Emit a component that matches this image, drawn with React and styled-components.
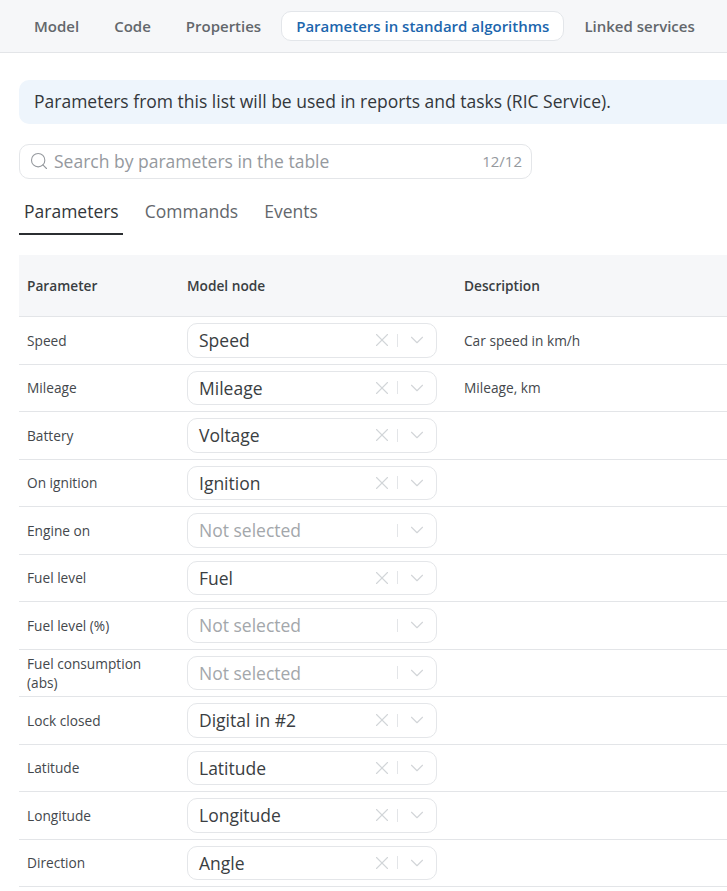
import styled, { createGlobalStyle } from "styled-components";
import { Search, X, ChevronDown } from "lucide-react";

const GlobalStyle = createGlobalStyle`
  html, body {
    margin: 0;
    padding: 0;
    background: #fff;
    font-family: "Open Sans", "Noto Sans", sans-serif;
    overflow: hidden;
  }
`

const Page = styled.div`
  width: 727px;
  height: 891px;
  overflow: hidden;
`
const TopBar = styled.div`
  height: 53px;
  box-sizing: border-box;
  display: flex;
  align-items: center;
  gap: 5px;
  padding-left: 19px;
  background: #f6f7f9;
  border-bottom: 1px solid #e3e5e8;
`
const TopTab = styled.div`
  height: 28px;
  display: flex;
  align-items: center;
  padding: 0 14px;
  font-size: 15px;
  font-weight: 600;
  white-space: nowrap;
  color: ${(p) => (p.$active ? "#1c66ad" : "#63676c")};
  background: ${(p) => (p.$active ? "#fff" : "transparent")};
  border: 1px solid ${(p) => (p.$active ? "#e3e6ea" : "transparent")};
  border-radius: 10px;
`
const Content = styled.div`
  padding: 27px 0 0 19px;
`
const Banner = styled.div`
  height: 44px;
  box-sizing: border-box;
  display: flex;
  align-items: center;
  padding: 0 0 2px 15px;
  background: #eef5fc;
  border-radius: 10px 0 0 10px;
  font-size: 17.5px;
  color: #33373b;
  white-space: nowrap;
`
const SearchBox = styled.div`
  width: 513px;
  height: 35px;
  box-sizing: border-box;
  margin-top: 20px;
  display: flex;
  align-items: center;
  padding: 0 9px 1px 9px;
  border: 1px solid #e4e6e9;
  border-radius: 10px;
  color: #95999e;
`
const SearchText = styled.span`
  flex: 1;
  margin-left: 5px;
  font-size: 17.5px;
`
const Counter = styled.span`
  font-size: 15px;
`
const SubTabs = styled.div`
  display: flex;
  gap: 18px;
  margin-top: 20px;
`
const SubTab = styled.div`
  height: 36px;
  box-sizing: border-box;
  padding: 0 4px 0 ${(p) => (p.$active ? "5px" : "4px")};
  font-size: 17.5px;
  line-height: 24px;
  color: ${(p) => (p.$active ? "#33373b" : "#63676c")};
  border-bottom: 2px solid ${(p) => (p.$active ? "#2b2e31" : "transparent")};
`
const Table = styled.div`
  margin-top: 20px;
`
const Row = styled.div`
  display: grid;
  grid-template-columns: 168px 277px 1fr;
  align-items: center;
  height: 47.5px;
  box-sizing: border-box;
  border-bottom: 1px solid #e3e5e8;
  font-size: 13.7px;
  color: #44484c;
`
const HeaderRow = styled(Row)`
  height: 62px;
  background: #f6f7f9;
  font-weight: 600;
  color: #3a3e42;
`
const Cell = styled.div`
  padding: 0 24px 0 8px;
  line-height: 19px;
`
const NodeCell = styled.div`
  white-space: nowrap;
`
const Select = styled.div`
  width: 250px;
  height: 34.5px;
  box-sizing: border-box;
  display: flex;
  align-items: center;
  padding: 0 8px 0 11px;
  border: 1px solid #e4e6e9;
  border-radius: 10px;
`
const SelectValue = styled.span`
  flex: 1;
  font-size: 17.5px;
  color: ${(p) => (p.$empty ? "#a3a7ab" : "#3a3e42")};
`
const ClearIcon = styled(X)`
  width: 22px;
  height: 22px;
  color: #d2d5d8;
`
const Divider = styled.span`
  width: 1px;
  height: 13px;
  margin: 0 8px 0 4px;
  background: #e3e5e8;
`
const ArrowIcon = styled(ChevronDown)`
  width: 22px;
  height: 22px;
  color: #d2d5d8;
`

const topTabs = ["Model", "Code", "Properties", "Parameters in standard algorithms", "Linked services"]

const rows = [
  { name: "Speed", node: "Speed", description: "Car speed in km/h" },
  { name: "Mileage", node: "Mileage", description: "Mileage, km" },
  { name: "Battery", node: "Voltage" },
  { name: "On ignition", node: "Ignition" },
  { name: "Engine on" },
  { name: "Fuel level", node: "Fuel" },
  { name: "Fuel level (%)" },
  { name: "Fuel consumption (abs)" },
  { name: "Lock closed", node: "Digital in #2" },
  { name: "Latitude", node: "Latitude" },
  { name: "Longitude", node: "Longitude" },
  { name: "Direction", node: "Angle" },
]

const App = () => {
  return (
    <Page>
      <GlobalStyle />
      <TopBar>
        {topTabs.map((tab, i) => (
          <TopTab key={tab} $active={i === 3}>{tab}</TopTab>
        ))}
      </TopBar>
      <Content>
        <Banner>Parameters from this list will be used in reports and tasks (RIC Service).</Banner>
        <SearchBox>
          <Search size={20} strokeWidth={1.3} />
          <SearchText>Search by parameters in the table</SearchText>
          <Counter>12/12</Counter>
        </SearchBox>
        <SubTabs>
          <SubTab $active>Parameters</SubTab>
          <SubTab>Commands</SubTab>
          <SubTab>Events</SubTab>
        </SubTabs>
        <Table>
          <HeaderRow>
            <Cell>Parameter</Cell>
            <NodeCell>Model node</NodeCell>
            <div>Description</div>
          </HeaderRow>
          {rows.map((row) => (
            <Row key={row.name}>
              <Cell>{row.name}</Cell>
              <NodeCell>
                <Select>
                  <SelectValue $empty={!row.node}>{row.node || "Not selected"}</SelectValue>
                  {row.node && <ClearIcon strokeWidth={1.2} />}
                  <Divider />
                  <ArrowIcon strokeWidth={1.2} />
                </Select>
              </NodeCell>
              <div>{row.description}</div>
            </Row>
          ))}
        </Table>
      </Content>
    </Page>
  )
}

export default App
